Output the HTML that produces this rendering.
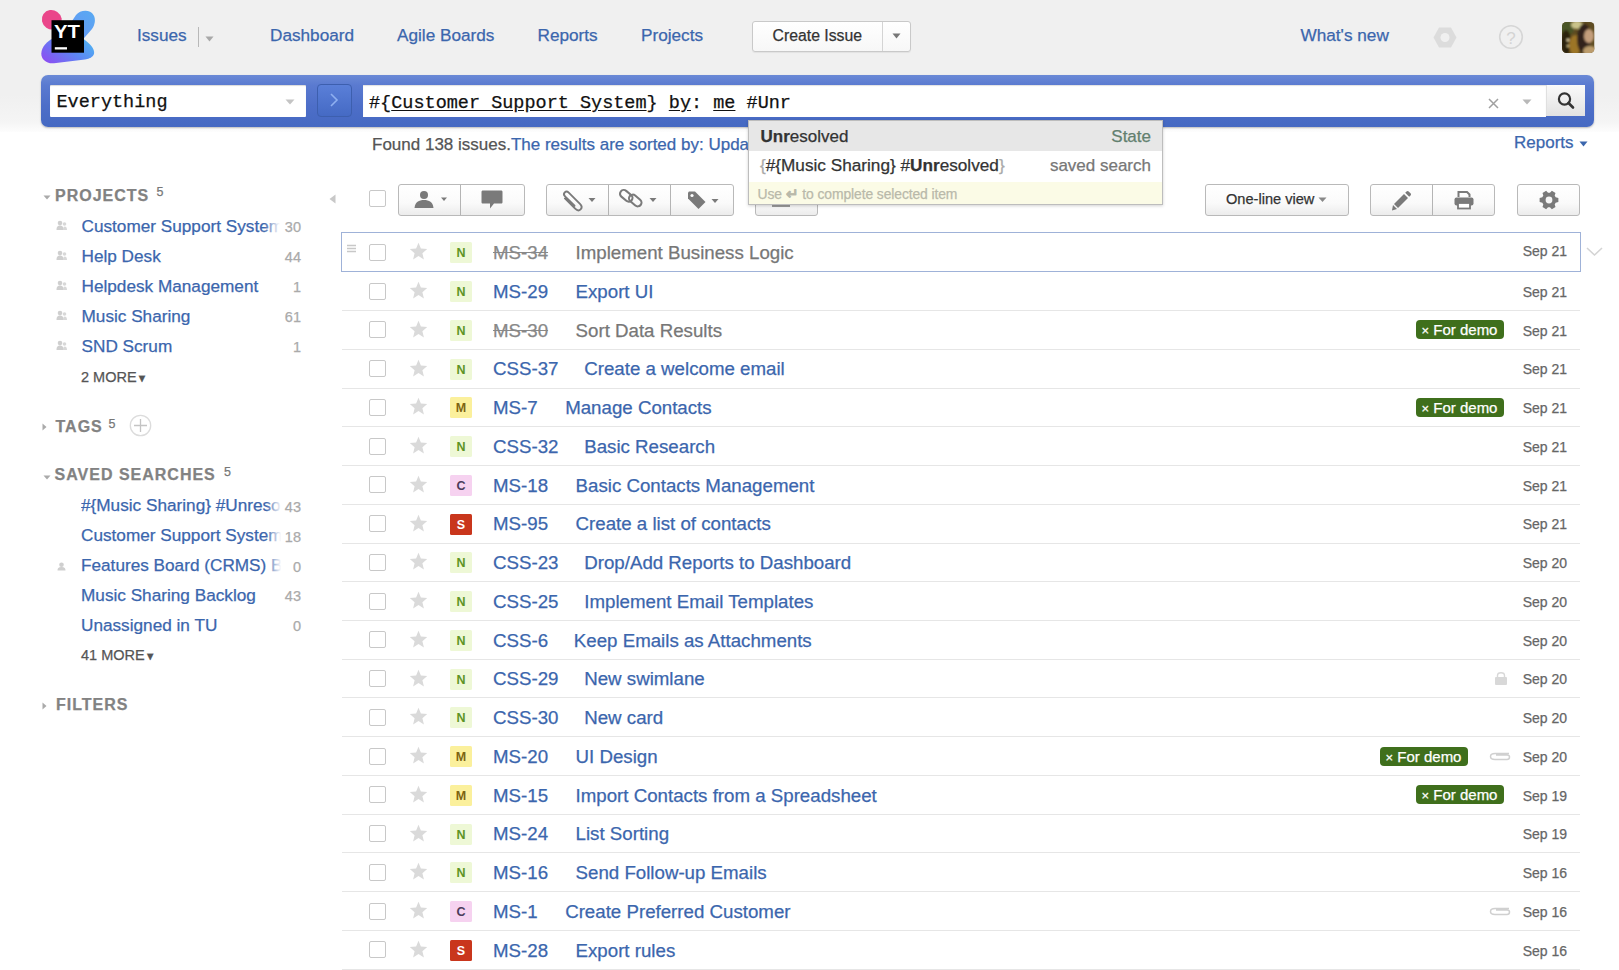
<!DOCTYPE html>
<html><head><meta charset="utf-8"><title>YouTrack Issues</title>
<style>
html,body{margin:0;padding:0;}
body{width:1619px;height:970px;overflow:hidden;position:relative;background:#fff;font-family:'Liberation Sans', sans-serif;}
.t{position:absolute;white-space:nowrap;-webkit-text-stroke-width:0.25px;}
svg{overflow:visible;}
</style></head><body>
<div style="position:absolute;left:0px;top:0px;width:1619px;height:132px;background:linear-gradient(#f0f0f0 0px,#f0f0f0 95px,#f5f5f5 122px,#fdfdfd 132px);"></div>
<svg style="position:absolute;left:40px;top:9px" width="56" height="56" viewBox="0 0 56 56">
<defs><linearGradient id="lg1" x1="0" y1="0.8" x2="1" y2="0.2"><stop offset="0" stop-color="#8b4ff2"/><stop offset="0.55" stop-color="#5c86f4"/><stop offset="1" stop-color="#4fb4f2"/></linearGradient>
<linearGradient id="lg2" x1="0" y1="1" x2="1" y2="0"><stop offset="0" stop-color="#6a8ef5"/><stop offset="1" stop-color="#58aaf2"/></linearGradient></defs>
<ellipse cx="11.8" cy="10.8" rx="10.2" ry="9.6" transform="rotate(35 11.8 10.8)" fill="#ea468a"/>
<path d="M20 30 L36 6 C40 1, 50 0, 53.5 6 C56 10, 55 16, 52 20 L38 36 Z" fill="url(#lg2)"/>
<path d="M14 29 L42 29 C50 34, 55 40, 54 45 C53 48, 50 49.5, 45 50.5 L14 54.3 C6 55, 1.2 50, 1.3 44.5 C1.5 38, 7 32, 14 29 Z" fill="url(#lg1)"/>
<rect x="11.5" y="11.2" width="32.5" height="32.5" fill="#000"/>
<text x="14" y="29" font-family="Liberation Sans" font-weight="700" font-size="18.6" fill="#fff" textLength="26" lengthAdjust="spacingAndGlyphs">YT</text>
<rect x="14.8" y="38.2" width="12.2" height="2.3" fill="#fff"/>
</svg>
<div class="t" style="left:137px;top:26.74px;font-size:17.2px;line-height:17.2px;color:#3b66ad;font-weight:400;font-family:'Liberation Sans', sans-serif;">Issues</div>
<div style="position:absolute;left:198px;top:27px;width:1px;height:20px;background:#b8b8b8;"></div>
<svg style="position:absolute;left:205px;top:36px" width="9" height="6" viewBox="0 0 9 6"><path d="M0.5 0.5 L8.5 0.5 L4.5 5.5 Z" fill="#a8a8a8"/></svg>
<div class="t" style="left:270px;top:26.74px;font-size:17.2px;line-height:17.2px;color:#3b66ad;font-weight:400;font-family:'Liberation Sans', sans-serif;">Dashboard</div>
<div class="t" style="left:397px;top:26.74px;font-size:17.2px;line-height:17.2px;color:#3b66ad;font-weight:400;font-family:'Liberation Sans', sans-serif;">Agile Boards</div>
<div class="t" style="left:537.5px;top:26.74px;font-size:17.2px;line-height:17.2px;color:#3b66ad;font-weight:400;font-family:'Liberation Sans', sans-serif;">Reports</div>
<div class="t" style="left:641px;top:26.74px;font-size:17.2px;line-height:17.2px;color:#3b66ad;font-weight:400;font-family:'Liberation Sans', sans-serif;">Projects</div>
<div style="position:absolute;left:752px;top:21px;width:159px;height:31px;background:linear-gradient(#ffffff,#f7f7f7);border:1px solid #c9c9c9;border-radius:3px;box-sizing:border-box;box-shadow:0 1px 1px rgba(0,0,0,0.06);"></div>
<div style="position:absolute;left:882px;top:22px;width:1px;height:29px;background:#d4d4d4;"></div>
<div class="t" style="left:772.5px;top:27.73px;font-size:15.8px;line-height:15.8px;color:#333;font-weight:400;font-family:'Liberation Sans', sans-serif;">Create Issue</div>
<svg style="position:absolute;left:892px;top:33px" width="9" height="6" viewBox="0 0 9 6"><path d="M0.5 0.5 L8.5 0.5 L4.5 5.5 Z" fill="#777"/></svg>
<div class="t" style="left:1300.5px;top:26.94px;font-size:17.2px;line-height:17.2px;color:#3b66ad;font-weight:400;font-family:'Liberation Sans', sans-serif;">What's new</div>
<svg style="position:absolute;left:1433px;top:27px" width="24" height="21" viewBox="0 0 24 21"><path d="M6 0.5 L18 0.5 L23.5 10.5 L18 20.5 L6 20.5 L0.5 10.5 Z" fill="#dcdcdc"/><circle cx="12" cy="10.5" r="4.5" fill="#f0f0f0"/></svg>
<svg style="position:absolute;left:1498px;top:24px" width="26" height="26" viewBox="0 0 26 26"><circle cx="13" cy="13" r="11.3" fill="none" stroke="#d6d6d6" stroke-width="1.6"/><text x="13" y="19.5" text-anchor="middle" font-family="Liberation Sans" font-size="17" fill="#d4d4d4">?</text></svg>
<svg style="position:absolute;left:1561.5px;top:22px" width="32.5" height="31" viewBox="0 0 32.5 31"><defs><clipPath id="avc"><rect x="0" y="0" width="32.5" height="31" rx="4.5"/></clipPath><filter id="avb" x="-20%" y="-20%" width="140%" height="140%"><feGaussianBlur stdDeviation="1.1"/></filter></defs>
<g clip-path="url(#avc)"><rect x="0" y="0" width="32.5" height="31" fill="#5e4c22"/><g filter="url(#avb)">
<ellipse cx="5" cy="6" rx="7" ry="7" fill="#4a5426"/><ellipse cx="15" cy="3" rx="6" ry="4" fill="#c9c28a"/>
<ellipse cx="4" cy="20" rx="5" ry="12" fill="#2a2210"/><ellipse cx="13" cy="23" rx="6" ry="10" fill="#9c7428"/>
<ellipse cx="22" cy="17" rx="7" ry="15" fill="#33241a"/><ellipse cx="27" cy="14" rx="5" ry="7" fill="#c49e7c"/>
<ellipse cx="28" cy="29" rx="7" ry="5" fill="#bc9c6c"/><circle cx="6" cy="18" r="1.5" fill="#e6d6a6"/><circle cx="6" cy="24" r="1.3" fill="#c8b880"/>
</g></g></svg>
<div style="position:absolute;left:41px;top:75px;width:1553px;height:52px;border-radius:7px;background:linear-gradient(#6b8ad6 0%,#5a7ad0 20%,#4d6ec8 60%,#4569c2 100%);box-shadow:0 1px 2px rgba(0,0,0,0.25);"></div>
<div style="position:absolute;left:50px;top:85px;width:256px;height:32px;background:#fff;border-radius:1px;box-shadow:inset 0 1px 1px rgba(0,0,0,0.15);"></div>
<div class="t" style="left:56.5px;top:94.22px;font-size:18.5px;line-height:18.5px;color:#111;font-weight:400;font-family:'Liberation Mono', monospace;">Everything</div>
<svg style="position:absolute;left:285px;top:99px" width="10" height="6" viewBox="0 0 10 6"><path d="M0.5 0.5 L9.5 0.5 L5 5.5 Z" fill="#c4c4c4"/></svg>
<div style="position:absolute;left:317px;top:84px;width:35px;height:33px;border-radius:4px;background:linear-gradient(#5a7fd8,#456ac4);border:1px solid #3d5fae;box-sizing:border-box;"></div>
<svg style="position:absolute;left:329px;top:92px" width="10" height="16" viewBox="0 0 10 16"><path d="M2 2 L8 8 L2 14" fill="none" stroke="#8fb0f0" stroke-width="1.6"/></svg>
<div style="position:absolute;left:363px;top:85px;width:1183px;height:32px;background:#fff;box-shadow:inset 0 1px 1px rgba(0,0,0,0.12);"></div>
<div class="t" style="left:369px;top:94.82px;font-size:18.5px;line-height:18.5px;color:#111;font-weight:400;font-family:'Liberation Mono', monospace;text-decoration-thickness:1px;text-underline-offset:2px;">#{<u>Customer Support System</u>} <u>by</u>: <u>me</u> #Unr</div>
<svg style="position:absolute;left:1488px;top:98px" width="11" height="11" viewBox="0 0 11 11"><path d="M1 1 L10 10 M10 1 L1 10" stroke="#a0a0a0" stroke-width="1.5"/></svg>
<svg style="position:absolute;left:1522px;top:99px" width="10" height="6" viewBox="0 0 10 6"><path d="M0.5 0.5 L9.5 0.5 L5 5.5 Z" fill="#b8b8b8"/></svg>
<div style="position:absolute;left:1546px;top:85px;width:39px;height:31px;background:linear-gradient(#fafafa,#e2e2e2);border-left:1px solid #e0e0e0;box-sizing:border-box;"></div>
<svg style="position:absolute;left:1555px;top:90px" width="22" height="22" viewBox="0 0 22 22"><circle cx="9.5" cy="9" r="5.6" fill="none" stroke="#333" stroke-width="2.2"/><path d="M13.5 13 L18 17.5" stroke="#333" stroke-width="2.6" stroke-linecap="round"/></svg>
<div class="t" style="left:372px;top:135.81px;font-size:17px;line-height:17px;color:#555;font-weight:400;font-family:'Liberation Sans', sans-serif;width:378px;overflow:hidden;">Found 138 issues.<span style="color:#3b66ad">The results are sorted by: Updated</span></div>
<div class="t" style="left:1514px;top:134.11px;font-size:17px;line-height:17px;color:#3b66ad;font-weight:400;font-family:'Liberation Sans', sans-serif;">Reports</div>
<svg style="position:absolute;left:1579px;top:141px" width="9" height="6" viewBox="0 0 9 6"><path d="M0.5 0.5 L8.5 0.5 L4.5 5.5 Z" fill="#3b66ad"/></svg>
<div style="position:absolute;left:369px;top:190px;width:17px;height:17px;border:1px solid #c8c8c8;border-radius:2px;box-sizing:border-box;background:#fff;"></div>
<div style="position:absolute;left:398px;top:184px;width:127px;height:32px;background:linear-gradient(#ffffff 0%,#fafafa 60%,#ececec 100%);border:1px solid #b9b9b9;border-radius:3px;box-sizing:border-box;"></div>
<div style="position:absolute;left:460px;top:185px;width:1px;height:30px;background:#b4b4b4;"></div>
<svg style="position:absolute;left:412px;top:187px" width="40" height="24" viewBox="0 0 40 24"><circle cx="12" cy="8" r="4" fill="#7a7a7a"/><path d="M2.5 21 C 3 15, 7 13, 12 13 C 17 13, 21 15, 21.5 21 Z" fill="#7a7a7a"/><path d="M29 10.5 L35 10.5 L32 14 Z" fill="#7a7a7a"/></svg>
<svg style="position:absolute;left:480px;top:188px" width="26" height="24" viewBox="0 0 26 24"><path d="M3 2.5 L21 2.5 C22 2.5 22.5 3 22.5 4 L22.5 14 C22.5 15 22 15.5 21 15.5 L14 15.5 L10 20.5 L10 15.5 L3 15.5 C2 15.5 1.5 15 1.5 14 L1.5 4 C1.5 3 2 2.5 3 2.5 Z" fill="#7a7a7a"/></svg>
<div style="position:absolute;left:546px;top:184px;width:188px;height:32px;background:linear-gradient(#ffffff 0%,#fafafa 60%,#ececec 100%);border:1px solid #b9b9b9;border-radius:3px;box-sizing:border-box;"></div>
<div style="position:absolute;left:608px;top:185px;width:1px;height:30px;background:#b4b4b4;"></div>
<div style="position:absolute;left:670px;top:185px;width:1px;height:30px;background:#b4b4b4;"></div>
<svg style="position:absolute;left:560px;top:188px" width="40" height="26" viewBox="0 0 40 26"><g transform="rotate(-45 12.4 13.4)"><path d="M9.2 6 L9.2 20.5 C9.2 23 10.6 24.8 12.6 24.8 C14.6 24.8 16 23 16 20.5 L16 4.6 C16 2.8 14.9 1.6 13.4 1.6 C11.9 1.6 10.8 2.8 10.8 4.6 L10.8 18" fill="none" stroke="#7a7a7a" stroke-width="1.9" stroke-linecap="round" transform="translate(0,0)"/></g><path d="M28.5 10 L35.5 10 L32 14 Z" fill="#7a7a7a"/></svg>
<svg style="position:absolute;left:618px;top:188px" width="44" height="24" viewBox="0 0 44 24"><rect x="4.5" y="0.8" width="7.5" height="14" rx="3.75" transform="rotate(-50 8.25 7.8)" fill="none" stroke="#7a7a7a" stroke-width="2.1"/><rect x="13.5" y="5.5" width="7.5" height="14" rx="3.75" transform="rotate(-50 17.25 12.5)" fill="none" stroke="#7a7a7a" stroke-width="2.1"/><path d="M31.5 10 L38.5 10 L35 14 Z" fill="#7a7a7a"/></svg>
<svg style="position:absolute;left:686px;top:188.5px" width="40" height="26" viewBox="0 0 40 26"><path d="M2 3.5 L2 9.5 L12.5 20 L19.5 13 L9 2.5 L3 2.5 Z" fill="#7a7a7a"/><circle cx="6" cy="6.5" r="1.6" fill="#fff"/><path d="M25.5 10 L32.5 10 L29 14 Z" fill="#7a7a7a"/></svg>
<div style="position:absolute;left:755px;top:184px;width:63px;height:32px;background:linear-gradient(#ffffff 0%,#fafafa 60%,#ececec 100%);border:1px solid #b9b9b9;border-radius:3px;box-sizing:border-box;"></div>
<div style="position:absolute;left:772px;top:197px;width:18px;height:10px;border:2px solid #9a9a9a;border-top:none;box-sizing:border-box;"></div>
<div style="position:absolute;left:1205px;top:184px;width:144px;height:32px;background:linear-gradient(#ffffff 0%,#fafafa 60%,#ececec 100%);border:1px solid #b9b9b9;border-radius:3px;box-sizing:border-box;"></div>
<div class="t" style="left:1226px;top:192.14px;font-size:14.6px;line-height:14.6px;color:#333;font-weight:400;font-family:'Liberation Sans', sans-serif;">One-line view</div>
<svg style="position:absolute;left:1318px;top:197px" width="9" height="6" viewBox="0 0 9 6"><path d="M0.5 0.5 L8.5 0.5 L4.5 5 Z" fill="#888"/></svg>
<div style="position:absolute;left:1370px;top:184px;width:125px;height:32px;background:linear-gradient(#ffffff 0%,#fafafa 60%,#ececec 100%);border:1px solid #b9b9b9;border-radius:3px;box-sizing:border-box;"></div>
<div style="position:absolute;left:1432px;top:185px;width:1px;height:30px;background:#b4b4b4;"></div>
<svg style="position:absolute;left:1390px;top:190px" width="22" height="22" viewBox="0 0 22 22"><path d="M4 14 L14 4 L18 8 L8 18 Z" fill="#7a7a7a"/><path d="M15.2 2.8 L16.5 1.5 C17.2 0.8 18 0.8 18.7 1.5 L20.5 3.3 C21.2 4 21.2 4.8 20.5 5.5 L19.2 6.8 Z" fill="#7a7a7a"/><path d="M3 15 L7 19 L2 20.5 Z" fill="#7a7a7a"/></svg>
<svg style="position:absolute;left:1453px;top:190px" width="22" height="22" viewBox="0 0 22 22"><path d="M5.5 7 L5.5 2 L14 2 L16.5 4.5 L16.5 7" fill="none" stroke="#7a7a7a" stroke-width="2"/><rect x="1.5" y="7.5" width="19" height="8" rx="2" fill="#7a7a7a"/><rect x="5" y="13" width="12" height="5.5" fill="#fff" stroke="#7a7a7a" stroke-width="1.8"/></svg>
<div style="position:absolute;left:1517px;top:184px;width:63px;height:32px;background:linear-gradient(#ffffff 0%,#fafafa 60%,#ececec 100%);border:1px solid #b9b9b9;border-radius:3px;box-sizing:border-box;"></div>
<svg style="position:absolute;left:1537px;top:188px" width="24" height="24" viewBox="0 0 24 24"><polygon points="21.37,9.90 21.37,14.10 18.66,14.74 17.70,16.40 18.50,19.07 14.87,21.16 12.96,19.14 11.04,19.14 9.13,21.16 5.50,19.07 6.30,16.40 5.34,14.74 2.63,14.10 2.63,9.90 5.34,9.26 6.30,7.60 5.50,4.93 9.13,2.84 11.04,4.86 12.96,4.86 14.87,2.84 18.50,4.93 17.70,7.60 18.66,9.26" fill="#7a7a7a"/><circle cx="12" cy="12" r="3.4" fill="#f6f6f6"/></svg>
<svg style="position:absolute;left:43px;top:195px" width="8" height="5" viewBox="0 0 8 5"><path d="M0.5 0.5 L7.5 0.5 L4 4.5 Z" fill="#aaa"/></svg>
<div class="t" style="left:55px;top:187.76px;font-size:16px;line-height:16px;color:#828282;font-weight:700;font-family:'Liberation Sans', sans-serif;letter-spacing:1.0px;">PROJECTS</div>
<div class="t" style="left:156.5px;top:186.42px;font-size:12.5px;line-height:12.5px;color:#777;font-weight:400;font-family:'Liberation Sans', sans-serif;">5</div>
<svg style="position:absolute;left:329px;top:194px" width="7" height="10" viewBox="0 0 7 10"><path d="M6.5 0.5 L6.5 9.5 L0.5 5 Z" fill="#c8c8c8"/></svg>
<svg style="position:absolute;left:56px;top:220.2px" width="12" height="11" viewBox="0 0 12 11"><circle cx="4" cy="3" r="2.3" fill="#cfcfcf"/><path d="M0.5 10 C0.5 6.5 2 5.5 4 5.5 C6 5.5 7.5 6.5 7.5 10 Z" fill="#cfcfcf"/><circle cx="8.5" cy="4" r="1.8" fill="#d8d8d8"/><path d="M7 10 C7 7 8 6.5 8.8 6.5 C10 6.5 11 7.5 11 10 Z" fill="#d8d8d8"/></svg>
<div class="t" style="left:81.5px;top:218.14px;font-size:17.2px;line-height:17.2px;color:#3b66ad;font-weight:400;font-family:'Liberation Sans', sans-serif;width:201px;overflow:hidden;white-space:nowrap;">Customer Support System</div>
<div class="t" style="right:1318px;top:220.43px;font-size:14.5px;line-height:14.5px;color:#aaa;font-weight:400;font-family:'Liberation Sans', sans-serif;">30</div>
<svg style="position:absolute;left:56px;top:249.7px" width="12" height="11" viewBox="0 0 12 11"><circle cx="4" cy="3" r="2.3" fill="#cfcfcf"/><path d="M0.5 10 C0.5 6.5 2 5.5 4 5.5 C6 5.5 7.5 6.5 7.5 10 Z" fill="#cfcfcf"/><circle cx="8.5" cy="4" r="1.8" fill="#d8d8d8"/><path d="M7 10 C7 7 8 6.5 8.8 6.5 C10 6.5 11 7.5 11 10 Z" fill="#d8d8d8"/></svg>
<div class="t" style="left:81.5px;top:247.64px;font-size:17.2px;line-height:17.2px;color:#3b66ad;font-weight:400;font-family:'Liberation Sans', sans-serif;width:201px;overflow:hidden;white-space:nowrap;">Help Desk</div>
<div class="t" style="right:1318px;top:249.93px;font-size:14.5px;line-height:14.5px;color:#aaa;font-weight:400;font-family:'Liberation Sans', sans-serif;">44</div>
<svg style="position:absolute;left:56px;top:280.0px" width="12" height="11" viewBox="0 0 12 11"><circle cx="4" cy="3" r="2.3" fill="#cfcfcf"/><path d="M0.5 10 C0.5 6.5 2 5.5 4 5.5 C6 5.5 7.5 6.5 7.5 10 Z" fill="#cfcfcf"/><circle cx="8.5" cy="4" r="1.8" fill="#d8d8d8"/><path d="M7 10 C7 7 8 6.5 8.8 6.5 C10 6.5 11 7.5 11 10 Z" fill="#d8d8d8"/></svg>
<div class="t" style="left:81.5px;top:277.94px;font-size:17.2px;line-height:17.2px;color:#3b66ad;font-weight:400;font-family:'Liberation Sans', sans-serif;width:201px;overflow:hidden;white-space:nowrap;">Helpdesk Management</div>
<div class="t" style="right:1318px;top:280.23px;font-size:14.5px;line-height:14.5px;color:#aaa;font-weight:400;font-family:'Liberation Sans', sans-serif;">1</div>
<svg style="position:absolute;left:56px;top:309.9px" width="12" height="11" viewBox="0 0 12 11"><circle cx="4" cy="3" r="2.3" fill="#cfcfcf"/><path d="M0.5 10 C0.5 6.5 2 5.5 4 5.5 C6 5.5 7.5 6.5 7.5 10 Z" fill="#cfcfcf"/><circle cx="8.5" cy="4" r="1.8" fill="#d8d8d8"/><path d="M7 10 C7 7 8 6.5 8.8 6.5 C10 6.5 11 7.5 11 10 Z" fill="#d8d8d8"/></svg>
<div class="t" style="left:81.5px;top:307.84px;font-size:17.2px;line-height:17.2px;color:#3b66ad;font-weight:400;font-family:'Liberation Sans', sans-serif;width:201px;overflow:hidden;white-space:nowrap;">Music Sharing</div>
<div class="t" style="right:1318px;top:310.13px;font-size:14.5px;line-height:14.5px;color:#aaa;font-weight:400;font-family:'Liberation Sans', sans-serif;">61</div>
<svg style="position:absolute;left:56px;top:339.7px" width="12" height="11" viewBox="0 0 12 11"><circle cx="4" cy="3" r="2.3" fill="#cfcfcf"/><path d="M0.5 10 C0.5 6.5 2 5.5 4 5.5 C6 5.5 7.5 6.5 7.5 10 Z" fill="#cfcfcf"/><circle cx="8.5" cy="4" r="1.8" fill="#d8d8d8"/><path d="M7 10 C7 7 8 6.5 8.8 6.5 C10 6.5 11 7.5 11 10 Z" fill="#d8d8d8"/></svg>
<div class="t" style="left:81.5px;top:337.64px;font-size:17.2px;line-height:17.2px;color:#3b66ad;font-weight:400;font-family:'Liberation Sans', sans-serif;width:201px;overflow:hidden;white-space:nowrap;">SND Scrum</div>
<div class="t" style="right:1318px;top:339.93px;font-size:14.5px;line-height:14.5px;color:#aaa;font-weight:400;font-family:'Liberation Sans', sans-serif;">1</div>
<div style="position:absolute;left:264px;top:215px;width:20px;height:22px;background:linear-gradient(90deg, rgba(255,255,255,0), #fff 80%);"></div>
<div class="t" style="left:81px;top:369.73px;font-size:14.5px;line-height:14.5px;color:#555;font-weight:400;font-family:'Liberation Sans', sans-serif;">2 MORE<span style="font-size:11px">&#9660;</span></div>
<svg style="position:absolute;left:42px;top:423px" width="5" height="8" viewBox="0 0 5 8"><path d="M0.5 0.5 L4.5 4 L0.5 7.5 Z" fill="#aaa"/></svg>
<div class="t" style="left:55.5px;top:419.46px;font-size:16px;line-height:16px;color:#828282;font-weight:700;font-family:'Liberation Sans', sans-serif;letter-spacing:1.0px;">TAGS</div>
<div class="t" style="left:108.5px;top:418.12px;font-size:12.5px;line-height:12.5px;color:#777;font-weight:400;font-family:'Liberation Sans', sans-serif;">5</div>
<svg style="position:absolute;left:129px;top:414px" width="23" height="23" viewBox="0 0 23 23"><circle cx="11.5" cy="11.5" r="10.2" fill="#fff" stroke="#dcdcdc" stroke-width="1.3"/><path d="M11.5 5 L11.5 18 M5 11.5 L18 11.5" stroke="#c4c4c4" stroke-width="1.3"/></svg>
<svg style="position:absolute;left:43px;top:475px" width="8" height="5" viewBox="0 0 8 5"><path d="M0.5 0.5 L7.5 0.5 L4 4.5 Z" fill="#aaa"/></svg>
<div class="t" style="left:54.5px;top:467.06px;font-size:16px;line-height:16px;color:#828282;font-weight:700;font-family:'Liberation Sans', sans-serif;letter-spacing:1.0px;">SAVED SEARCHES</div>
<div class="t" style="left:224px;top:465.72px;font-size:12.5px;line-height:12.5px;color:#777;font-weight:400;font-family:'Liberation Sans', sans-serif;">5</div>
<div class="t" style="left:81px;top:497.44px;font-size:17.2px;line-height:17.2px;color:#3b66ad;font-weight:400;font-family:'Liberation Sans', sans-serif;width:202px;overflow:hidden;white-space:nowrap;">#{Music Sharing} #Unresolved</div>
<div class="t" style="right:1318px;top:499.73px;font-size:14.5px;line-height:14.5px;color:#aaa;font-weight:400;font-family:'Liberation Sans', sans-serif;">43</div>
<div class="t" style="left:81px;top:527.24px;font-size:17.2px;line-height:17.2px;color:#3b66ad;font-weight:400;font-family:'Liberation Sans', sans-serif;width:202px;overflow:hidden;white-space:nowrap;">Customer Support System</div>
<div class="t" style="right:1318px;top:529.53px;font-size:14.5px;line-height:14.5px;color:#aaa;font-weight:400;font-family:'Liberation Sans', sans-serif;">18</div>
<svg style="position:absolute;left:57px;top:561.9px" width="10" height="9" viewBox="0 0 10 9"><circle cx="4.5" cy="2.8" r="2.3" fill="#cfcfcf"/><path d="M0.5 8.5 C0.5 5.5 2.5 5 4.5 5 C6.5 5 8.5 5.5 8.5 8.5 Z" fill="#cfcfcf"/></svg>
<div class="t" style="left:81px;top:557.34px;font-size:17.2px;line-height:17.2px;color:#3b66ad;font-weight:400;font-family:'Liberation Sans', sans-serif;width:202px;overflow:hidden;white-space:nowrap;">Features Board (CRMS) Backlog</div>
<div class="t" style="right:1318px;top:559.63px;font-size:14.5px;line-height:14.5px;color:#aaa;font-weight:400;font-family:'Liberation Sans', sans-serif;">0</div>
<div class="t" style="left:81px;top:587.04px;font-size:17.2px;line-height:17.2px;color:#3b66ad;font-weight:400;font-family:'Liberation Sans', sans-serif;width:202px;overflow:hidden;white-space:nowrap;">Music Sharing Backlog</div>
<div class="t" style="right:1318px;top:589.33px;font-size:14.5px;line-height:14.5px;color:#aaa;font-weight:400;font-family:'Liberation Sans', sans-serif;">43</div>
<div class="t" style="left:81px;top:617.14px;font-size:17.2px;line-height:17.2px;color:#3b66ad;font-weight:400;font-family:'Liberation Sans', sans-serif;width:202px;overflow:hidden;white-space:nowrap;">Unassigned in TU</div>
<div class="t" style="right:1318px;top:619.43px;font-size:14.5px;line-height:14.5px;color:#aaa;font-weight:400;font-family:'Liberation Sans', sans-serif;">0</div>
<div style="position:absolute;left:266px;top:495px;width:18px;height:82px;background:linear-gradient(90deg, rgba(255,255,255,0), #fff 85%);"></div>
<div class="t" style="left:81px;top:648.03px;font-size:14.5px;line-height:14.5px;color:#555;font-weight:400;font-family:'Liberation Sans', sans-serif;">41 MORE<span style="font-size:11px">&#9660;</span></div>
<svg style="position:absolute;left:42px;top:702px" width="5" height="8" viewBox="0 0 5 8"><path d="M0.5 0.5 L4.5 4 L0.5 7.5 Z" fill="#aaa"/></svg>
<div class="t" style="left:56px;top:697.36px;font-size:16px;line-height:16px;color:#828282;font-weight:700;font-family:'Liberation Sans', sans-serif;letter-spacing:1.0px;">FILTERS</div>
<div class="t" style="left:0px;top:696.02px;font-size:12.5px;line-height:12.5px;color:#777;font-weight:400;font-family:'Liberation Sans', sans-serif;"></div>
<div style="position:absolute;left:341px;top:232px;width:1240px;height:39.5px;border:1.5px solid #9fb2d8;box-sizing:border-box;background:#fff;"></div>
<svg style="position:absolute;left:346px;top:244px" width="11" height="10" viewBox="0 0 11 10"><path d="M1 1.5 H10 M1 4.5 H10 M1 7.5 H10" stroke="#c8c8c8" stroke-width="1.3"/></svg>
<svg style="position:absolute;left:1586px;top:247px" width="17" height="10" viewBox="0 0 17 10"><path d="M1 1 L8.5 8 L16 1" fill="none" stroke="#d4d4d4" stroke-width="1.6"/></svg>
<div style="position:absolute;left:369px;top:243.97px;width:17px;height:17px;border:1px solid #c8c8c8;border-radius:2px;box-sizing:border-box;background:#fff;"></div>
<svg style="position:absolute;left:409px;top:242.47px" width="19" height="19" viewBox="0 0 19 19"><path d="M9.5 0.8 L11.9 6.6 L18.2 7.1 L13.4 11.2 L14.9 17.4 L9.5 14 L4.1 17.4 L5.6 11.2 L0.8 7.1 L7.1 6.6 Z" fill="#dadada"/></svg>
<div class="t" style="left:450px;top:242.47px;width:22px;height:21px;line-height:22.5px;text-align:center;background:#eef8d6;color:#5e9424;-webkit-text-stroke-width:0;font-size:12.5px;font-family:'Liberation Sans', sans-serif;border-radius:1.5px;font-weight:700">N</div>
<div class="t" style="left:493px;top:244.24px;font-size:18.7px;line-height:18.7px;font-family:'Liberation Sans', sans-serif;white-space:nowrap"><span style="color:#888;text-decoration:line-through;">MS-34</span><span style="color:#777;margin-left:27.5px">Implement Business Logic</span></div>
<div class="t" style="right:52px;top:244.22px;font-size:14px;line-height:14px;color:#666;font-weight:400;font-family:'Liberation Sans', sans-serif;">Sep 21</div>
<div style="position:absolute;left:342px;top:310px;width:1238px;height:1px;background:#e6e6e6;"></div>
<div style="position:absolute;left:369px;top:282.71px;width:17px;height:17px;border:1px solid #c8c8c8;border-radius:2px;box-sizing:border-box;background:#fff;"></div>
<svg style="position:absolute;left:409px;top:281.21px" width="19" height="19" viewBox="0 0 19 19"><path d="M9.5 0.8 L11.9 6.6 L18.2 7.1 L13.4 11.2 L14.9 17.4 L9.5 14 L4.1 17.4 L5.6 11.2 L0.8 7.1 L7.1 6.6 Z" fill="#dadada"/></svg>
<div class="t" style="left:450px;top:281.21px;width:22px;height:21px;line-height:22.5px;text-align:center;background:#eef8d6;color:#5e9424;-webkit-text-stroke-width:0;font-size:12.5px;font-family:'Liberation Sans', sans-serif;border-radius:1.5px;font-weight:700">N</div>
<div class="t" style="left:493px;top:282.98px;font-size:18.7px;line-height:18.7px;font-family:'Liberation Sans', sans-serif;white-space:nowrap"><span style="color:#3b66ad;">MS-29</span><span style="color:#3b66ad;margin-left:27.5px">Export UI</span></div>
<div class="t" style="right:52px;top:284.96px;font-size:14px;line-height:14px;color:#666;font-weight:400;font-family:'Liberation Sans', sans-serif;">Sep 21</div>
<div style="position:absolute;left:342px;top:349px;width:1238px;height:1px;background:#e6e6e6;"></div>
<div style="position:absolute;left:369px;top:321.45px;width:17px;height:17px;border:1px solid #c8c8c8;border-radius:2px;box-sizing:border-box;background:#fff;"></div>
<svg style="position:absolute;left:409px;top:319.95px" width="19" height="19" viewBox="0 0 19 19"><path d="M9.5 0.8 L11.9 6.6 L18.2 7.1 L13.4 11.2 L14.9 17.4 L9.5 14 L4.1 17.4 L5.6 11.2 L0.8 7.1 L7.1 6.6 Z" fill="#dadada"/></svg>
<div class="t" style="left:450px;top:319.95px;width:22px;height:21px;line-height:22.5px;text-align:center;background:#eef8d6;color:#5e9424;-webkit-text-stroke-width:0;font-size:12.5px;font-family:'Liberation Sans', sans-serif;border-radius:1.5px;font-weight:700">N</div>
<div class="t" style="left:493px;top:321.72px;font-size:18.7px;line-height:18.7px;font-family:'Liberation Sans', sans-serif;white-space:nowrap"><span style="color:#888;text-decoration:line-through;">MS-30</span><span style="color:#777;margin-left:27.5px">Sort Data Results</span></div>
<div class="t" style="right:52px;top:323.70px;font-size:14px;line-height:14px;color:#666;font-weight:400;font-family:'Liberation Sans', sans-serif;">Sep 21</div>
<div class="t" style="left:1415.5px;top:320.45px;width:88px;height:19px;line-height:19px;background:#3f6f1c;color:#fff;font-size:15px;font-family:'Liberation Sans', sans-serif;border-radius:4px;text-align:center;white-space:nowrap"><span style="font-size:13px">&#215;</span> For demo</div>
<div style="position:absolute;left:342px;top:388px;width:1238px;height:1px;background:#e6e6e6;"></div>
<div style="position:absolute;left:369px;top:360.19px;width:17px;height:17px;border:1px solid #c8c8c8;border-radius:2px;box-sizing:border-box;background:#fff;"></div>
<svg style="position:absolute;left:409px;top:358.69px" width="19" height="19" viewBox="0 0 19 19"><path d="M9.5 0.8 L11.9 6.6 L18.2 7.1 L13.4 11.2 L14.9 17.4 L9.5 14 L4.1 17.4 L5.6 11.2 L0.8 7.1 L7.1 6.6 Z" fill="#dadada"/></svg>
<div class="t" style="left:450px;top:358.69px;width:22px;height:21px;line-height:22.5px;text-align:center;background:#eef8d6;color:#5e9424;-webkit-text-stroke-width:0;font-size:12.5px;font-family:'Liberation Sans', sans-serif;border-radius:1.5px;font-weight:700">N</div>
<div class="t" style="left:493px;top:360.46px;font-size:18.7px;line-height:18.7px;font-family:'Liberation Sans', sans-serif;white-space:nowrap"><span style="color:#3b66ad;">CSS-37</span><span style="color:#3b66ad;margin-left:25.8px">Create a welcome email</span></div>
<div class="t" style="right:52px;top:362.44px;font-size:14px;line-height:14px;color:#666;font-weight:400;font-family:'Liberation Sans', sans-serif;">Sep 21</div>
<div style="position:absolute;left:342px;top:426px;width:1238px;height:1px;background:#e6e6e6;"></div>
<div style="position:absolute;left:369px;top:398.93px;width:17px;height:17px;border:1px solid #c8c8c8;border-radius:2px;box-sizing:border-box;background:#fff;"></div>
<svg style="position:absolute;left:409px;top:397.43px" width="19" height="19" viewBox="0 0 19 19"><path d="M9.5 0.8 L11.9 6.6 L18.2 7.1 L13.4 11.2 L14.9 17.4 L9.5 14 L4.1 17.4 L5.6 11.2 L0.8 7.1 L7.1 6.6 Z" fill="#dadada"/></svg>
<div class="t" style="left:450px;top:397.43px;width:22px;height:21px;line-height:22.5px;text-align:center;background:#fbf09c;color:#7e6412;-webkit-text-stroke-width:0;font-size:12.5px;font-family:'Liberation Sans', sans-serif;border-radius:1.5px;font-weight:700">M</div>
<div class="t" style="left:493px;top:399.20px;font-size:18.7px;line-height:18.7px;font-family:'Liberation Sans', sans-serif;white-space:nowrap"><span style="color:#3b66ad;">MS-7</span><span style="color:#3b66ad;margin-left:27.5px">Manage Contacts</span></div>
<div class="t" style="right:52px;top:401.18px;font-size:14px;line-height:14px;color:#666;font-weight:400;font-family:'Liberation Sans', sans-serif;">Sep 21</div>
<div class="t" style="left:1415.5px;top:397.93px;width:88px;height:19px;line-height:19px;background:#3f6f1c;color:#fff;font-size:15px;font-family:'Liberation Sans', sans-serif;border-radius:4px;text-align:center;white-space:nowrap"><span style="font-size:13px">&#215;</span> For demo</div>
<div style="position:absolute;left:342px;top:465px;width:1238px;height:1px;background:#e6e6e6;"></div>
<div style="position:absolute;left:369px;top:437.67px;width:17px;height:17px;border:1px solid #c8c8c8;border-radius:2px;box-sizing:border-box;background:#fff;"></div>
<svg style="position:absolute;left:409px;top:436.17px" width="19" height="19" viewBox="0 0 19 19"><path d="M9.5 0.8 L11.9 6.6 L18.2 7.1 L13.4 11.2 L14.9 17.4 L9.5 14 L4.1 17.4 L5.6 11.2 L0.8 7.1 L7.1 6.6 Z" fill="#dadada"/></svg>
<div class="t" style="left:450px;top:436.17px;width:22px;height:21px;line-height:22.5px;text-align:center;background:#eef8d6;color:#5e9424;-webkit-text-stroke-width:0;font-size:12.5px;font-family:'Liberation Sans', sans-serif;border-radius:1.5px;font-weight:700">N</div>
<div class="t" style="left:493px;top:437.94px;font-size:18.7px;line-height:18.7px;font-family:'Liberation Sans', sans-serif;white-space:nowrap"><span style="color:#3b66ad;">CSS-32</span><span style="color:#3b66ad;margin-left:25.8px">Basic Research</span></div>
<div class="t" style="right:52px;top:439.92px;font-size:14px;line-height:14px;color:#666;font-weight:400;font-family:'Liberation Sans', sans-serif;">Sep 21</div>
<div style="position:absolute;left:342px;top:504px;width:1238px;height:1px;background:#e6e6e6;"></div>
<div style="position:absolute;left:369px;top:476.40999999999997px;width:17px;height:17px;border:1px solid #c8c8c8;border-radius:2px;box-sizing:border-box;background:#fff;"></div>
<svg style="position:absolute;left:409px;top:474.90999999999997px" width="19" height="19" viewBox="0 0 19 19"><path d="M9.5 0.8 L11.9 6.6 L18.2 7.1 L13.4 11.2 L14.9 17.4 L9.5 14 L4.1 17.4 L5.6 11.2 L0.8 7.1 L7.1 6.6 Z" fill="#dadada"/></svg>
<div class="t" style="left:450px;top:474.91px;width:22px;height:21px;line-height:22.5px;text-align:center;background:#f6d2f0;color:#4b3b5b;-webkit-text-stroke-width:0;font-size:12.5px;font-family:'Liberation Sans', sans-serif;border-radius:1.5px;font-weight:700">C</div>
<div class="t" style="left:493px;top:476.68px;font-size:18.7px;line-height:18.7px;font-family:'Liberation Sans', sans-serif;white-space:nowrap"><span style="color:#3b66ad;">MS-18</span><span style="color:#3b66ad;margin-left:27.5px">Basic Contacts Management</span></div>
<div class="t" style="right:52px;top:478.66px;font-size:14px;line-height:14px;color:#666;font-weight:400;font-family:'Liberation Sans', sans-serif;">Sep 21</div>
<div style="position:absolute;left:342px;top:543px;width:1238px;height:1px;background:#e6e6e6;"></div>
<div style="position:absolute;left:369px;top:515.15px;width:17px;height:17px;border:1px solid #c8c8c8;border-radius:2px;box-sizing:border-box;background:#fff;"></div>
<svg style="position:absolute;left:409px;top:513.65px" width="19" height="19" viewBox="0 0 19 19"><path d="M9.5 0.8 L11.9 6.6 L18.2 7.1 L13.4 11.2 L14.9 17.4 L9.5 14 L4.1 17.4 L5.6 11.2 L0.8 7.1 L7.1 6.6 Z" fill="#dadada"/></svg>
<div class="t" style="left:450px;top:513.65px;width:22px;height:21px;line-height:22.5px;text-align:center;background:#c9361c;color:#ffffff;-webkit-text-stroke-width:0;font-size:12.5px;font-family:'Liberation Sans', sans-serif;border-radius:1.5px;font-weight:700">S</div>
<div class="t" style="left:493px;top:515.42px;font-size:18.7px;line-height:18.7px;font-family:'Liberation Sans', sans-serif;white-space:nowrap"><span style="color:#3b66ad;">MS-95</span><span style="color:#3b66ad;margin-left:27.5px">Create a list of contacts</span></div>
<div class="t" style="right:52px;top:517.40px;font-size:14px;line-height:14px;color:#666;font-weight:400;font-family:'Liberation Sans', sans-serif;">Sep 21</div>
<div style="position:absolute;left:342px;top:581px;width:1238px;height:1px;background:#e6e6e6;"></div>
<div style="position:absolute;left:369px;top:553.89px;width:17px;height:17px;border:1px solid #c8c8c8;border-radius:2px;box-sizing:border-box;background:#fff;"></div>
<svg style="position:absolute;left:409px;top:552.39px" width="19" height="19" viewBox="0 0 19 19"><path d="M9.5 0.8 L11.9 6.6 L18.2 7.1 L13.4 11.2 L14.9 17.4 L9.5 14 L4.1 17.4 L5.6 11.2 L0.8 7.1 L7.1 6.6 Z" fill="#dadada"/></svg>
<div class="t" style="left:450px;top:552.39px;width:22px;height:21px;line-height:22.5px;text-align:center;background:#eef8d6;color:#5e9424;-webkit-text-stroke-width:0;font-size:12.5px;font-family:'Liberation Sans', sans-serif;border-radius:1.5px;font-weight:700">N</div>
<div class="t" style="left:493px;top:554.16px;font-size:18.7px;line-height:18.7px;font-family:'Liberation Sans', sans-serif;white-space:nowrap"><span style="color:#3b66ad;">CSS-23</span><span style="color:#3b66ad;margin-left:25.8px">Drop/Add Reports to Dashboard</span></div>
<div class="t" style="right:52px;top:556.14px;font-size:14px;line-height:14px;color:#666;font-weight:400;font-family:'Liberation Sans', sans-serif;">Sep 20</div>
<div style="position:absolute;left:342px;top:620px;width:1238px;height:1px;background:#e6e6e6;"></div>
<div style="position:absolute;left:369px;top:592.63px;width:17px;height:17px;border:1px solid #c8c8c8;border-radius:2px;box-sizing:border-box;background:#fff;"></div>
<svg style="position:absolute;left:409px;top:591.13px" width="19" height="19" viewBox="0 0 19 19"><path d="M9.5 0.8 L11.9 6.6 L18.2 7.1 L13.4 11.2 L14.9 17.4 L9.5 14 L4.1 17.4 L5.6 11.2 L0.8 7.1 L7.1 6.6 Z" fill="#dadada"/></svg>
<div class="t" style="left:450px;top:591.13px;width:22px;height:21px;line-height:22.5px;text-align:center;background:#eef8d6;color:#5e9424;-webkit-text-stroke-width:0;font-size:12.5px;font-family:'Liberation Sans', sans-serif;border-radius:1.5px;font-weight:700">N</div>
<div class="t" style="left:493px;top:592.90px;font-size:18.7px;line-height:18.7px;font-family:'Liberation Sans', sans-serif;white-space:nowrap"><span style="color:#3b66ad;">CSS-25</span><span style="color:#3b66ad;margin-left:25.8px">Implement Email Templates</span></div>
<div class="t" style="right:52px;top:594.88px;font-size:14px;line-height:14px;color:#666;font-weight:400;font-family:'Liberation Sans', sans-serif;">Sep 20</div>
<div style="position:absolute;left:342px;top:659px;width:1238px;height:1px;background:#e6e6e6;"></div>
<div style="position:absolute;left:369px;top:631.37px;width:17px;height:17px;border:1px solid #c8c8c8;border-radius:2px;box-sizing:border-box;background:#fff;"></div>
<svg style="position:absolute;left:409px;top:629.87px" width="19" height="19" viewBox="0 0 19 19"><path d="M9.5 0.8 L11.9 6.6 L18.2 7.1 L13.4 11.2 L14.9 17.4 L9.5 14 L4.1 17.4 L5.6 11.2 L0.8 7.1 L7.1 6.6 Z" fill="#dadada"/></svg>
<div class="t" style="left:450px;top:629.87px;width:22px;height:21px;line-height:22.5px;text-align:center;background:#eef8d6;color:#5e9424;-webkit-text-stroke-width:0;font-size:12.5px;font-family:'Liberation Sans', sans-serif;border-radius:1.5px;font-weight:700">N</div>
<div class="t" style="left:493px;top:631.64px;font-size:18.7px;line-height:18.7px;font-family:'Liberation Sans', sans-serif;white-space:nowrap"><span style="color:#3b66ad;">CSS-6</span><span style="color:#3b66ad;margin-left:25.8px">Keep Emails as Attachments</span></div>
<div class="t" style="right:52px;top:633.62px;font-size:14px;line-height:14px;color:#666;font-weight:400;font-family:'Liberation Sans', sans-serif;">Sep 20</div>
<div style="position:absolute;left:342px;top:697px;width:1238px;height:1px;background:#e6e6e6;"></div>
<div style="position:absolute;left:369px;top:670.11px;width:17px;height:17px;border:1px solid #c8c8c8;border-radius:2px;box-sizing:border-box;background:#fff;"></div>
<svg style="position:absolute;left:409px;top:668.61px" width="19" height="19" viewBox="0 0 19 19"><path d="M9.5 0.8 L11.9 6.6 L18.2 7.1 L13.4 11.2 L14.9 17.4 L9.5 14 L4.1 17.4 L5.6 11.2 L0.8 7.1 L7.1 6.6 Z" fill="#dadada"/></svg>
<div class="t" style="left:450px;top:668.61px;width:22px;height:21px;line-height:22.5px;text-align:center;background:#eef8d6;color:#5e9424;-webkit-text-stroke-width:0;font-size:12.5px;font-family:'Liberation Sans', sans-serif;border-radius:1.5px;font-weight:700">N</div>
<div class="t" style="left:493px;top:670.38px;font-size:18.7px;line-height:18.7px;font-family:'Liberation Sans', sans-serif;white-space:nowrap"><span style="color:#3b66ad;">CSS-29</span><span style="color:#3b66ad;margin-left:25.8px">New swimlane</span></div>
<div class="t" style="right:52px;top:672.36px;font-size:14px;line-height:14px;color:#666;font-weight:400;font-family:'Liberation Sans', sans-serif;">Sep 20</div>
<svg style="position:absolute;left:1494px;top:671.61px" width="14" height="13" viewBox="0 0 14 13"><rect x="1" y="5" width="12" height="8" rx="1" fill="#d8d8d8"/><path d="M3.5 5 V3.5 C3.5 1.5 5 0.8 7 0.8 C9 0.8 10.5 1.5 10.5 3.5 V5" fill="none" stroke="#d8d8d8" stroke-width="1.4"/></svg>
<div style="position:absolute;left:342px;top:736px;width:1238px;height:1px;background:#e6e6e6;"></div>
<div style="position:absolute;left:369px;top:708.85px;width:17px;height:17px;border:1px solid #c8c8c8;border-radius:2px;box-sizing:border-box;background:#fff;"></div>
<svg style="position:absolute;left:409px;top:707.35px" width="19" height="19" viewBox="0 0 19 19"><path d="M9.5 0.8 L11.9 6.6 L18.2 7.1 L13.4 11.2 L14.9 17.4 L9.5 14 L4.1 17.4 L5.6 11.2 L0.8 7.1 L7.1 6.6 Z" fill="#dadada"/></svg>
<div class="t" style="left:450px;top:707.35px;width:22px;height:21px;line-height:22.5px;text-align:center;background:#eef8d6;color:#5e9424;-webkit-text-stroke-width:0;font-size:12.5px;font-family:'Liberation Sans', sans-serif;border-radius:1.5px;font-weight:700">N</div>
<div class="t" style="left:493px;top:709.12px;font-size:18.7px;line-height:18.7px;font-family:'Liberation Sans', sans-serif;white-space:nowrap"><span style="color:#3b66ad;">CSS-30</span><span style="color:#3b66ad;margin-left:25.8px">New card</span></div>
<div class="t" style="right:52px;top:711.10px;font-size:14px;line-height:14px;color:#666;font-weight:400;font-family:'Liberation Sans', sans-serif;">Sep 20</div>
<div style="position:absolute;left:342px;top:775px;width:1238px;height:1px;background:#e6e6e6;"></div>
<div style="position:absolute;left:369px;top:747.59px;width:17px;height:17px;border:1px solid #c8c8c8;border-radius:2px;box-sizing:border-box;background:#fff;"></div>
<svg style="position:absolute;left:409px;top:746.09px" width="19" height="19" viewBox="0 0 19 19"><path d="M9.5 0.8 L11.9 6.6 L18.2 7.1 L13.4 11.2 L14.9 17.4 L9.5 14 L4.1 17.4 L5.6 11.2 L0.8 7.1 L7.1 6.6 Z" fill="#dadada"/></svg>
<div class="t" style="left:450px;top:746.09px;width:22px;height:21px;line-height:22.5px;text-align:center;background:#fbf09c;color:#7e6412;-webkit-text-stroke-width:0;font-size:12.5px;font-family:'Liberation Sans', sans-serif;border-radius:1.5px;font-weight:700">M</div>
<div class="t" style="left:493px;top:747.86px;font-size:18.7px;line-height:18.7px;font-family:'Liberation Sans', sans-serif;white-space:nowrap"><span style="color:#3b66ad;">MS-20</span><span style="color:#3b66ad;margin-left:27.5px">UI Design</span></div>
<div class="t" style="right:52px;top:749.84px;font-size:14px;line-height:14px;color:#666;font-weight:400;font-family:'Liberation Sans', sans-serif;">Sep 20</div>
<div class="t" style="left:1379.5px;top:746.59px;width:88px;height:19px;line-height:19px;background:#3f6f1c;color:#fff;font-size:15px;font-family:'Liberation Sans', sans-serif;border-radius:4px;text-align:center;white-space:nowrap"><span style="font-size:13px">&#215;</span> For demo</div>
<svg style="position:absolute;left:1489px;top:750.09px" width="22" height="12" viewBox="0 0 22 12"><path d="M20 3.5 H6 C3 3.5 1.5 5 1.5 6.5 C1.5 8 3 9.5 6 9.5 H18 C19.5 9.5 20.5 8.5 20.5 7 C20.5 5.5 19.5 5 18 5 H7" fill="none" stroke="#d0d0d0" stroke-width="1.5"/></svg>
<div style="position:absolute;left:342px;top:814px;width:1238px;height:1px;background:#e6e6e6;"></div>
<div style="position:absolute;left:369px;top:786.33px;width:17px;height:17px;border:1px solid #c8c8c8;border-radius:2px;box-sizing:border-box;background:#fff;"></div>
<svg style="position:absolute;left:409px;top:784.83px" width="19" height="19" viewBox="0 0 19 19"><path d="M9.5 0.8 L11.9 6.6 L18.2 7.1 L13.4 11.2 L14.9 17.4 L9.5 14 L4.1 17.4 L5.6 11.2 L0.8 7.1 L7.1 6.6 Z" fill="#dadada"/></svg>
<div class="t" style="left:450px;top:784.83px;width:22px;height:21px;line-height:22.5px;text-align:center;background:#fbf09c;color:#7e6412;-webkit-text-stroke-width:0;font-size:12.5px;font-family:'Liberation Sans', sans-serif;border-radius:1.5px;font-weight:700">M</div>
<div class="t" style="left:493px;top:786.60px;font-size:18.7px;line-height:18.7px;font-family:'Liberation Sans', sans-serif;white-space:nowrap"><span style="color:#3b66ad;">MS-15</span><span style="color:#3b66ad;margin-left:27.5px">Import Contacts from a Spreadsheet</span></div>
<div class="t" style="right:52px;top:788.58px;font-size:14px;line-height:14px;color:#666;font-weight:400;font-family:'Liberation Sans', sans-serif;">Sep 19</div>
<div class="t" style="left:1415.5px;top:785.33px;width:88px;height:19px;line-height:19px;background:#3f6f1c;color:#fff;font-size:15px;font-family:'Liberation Sans', sans-serif;border-radius:4px;text-align:center;white-space:nowrap"><span style="font-size:13px">&#215;</span> For demo</div>
<div style="position:absolute;left:342px;top:852px;width:1238px;height:1px;background:#e6e6e6;"></div>
<div style="position:absolute;left:369px;top:825.07px;width:17px;height:17px;border:1px solid #c8c8c8;border-radius:2px;box-sizing:border-box;background:#fff;"></div>
<svg style="position:absolute;left:409px;top:823.57px" width="19" height="19" viewBox="0 0 19 19"><path d="M9.5 0.8 L11.9 6.6 L18.2 7.1 L13.4 11.2 L14.9 17.4 L9.5 14 L4.1 17.4 L5.6 11.2 L0.8 7.1 L7.1 6.6 Z" fill="#dadada"/></svg>
<div class="t" style="left:450px;top:823.57px;width:22px;height:21px;line-height:22.5px;text-align:center;background:#eef8d6;color:#5e9424;-webkit-text-stroke-width:0;font-size:12.5px;font-family:'Liberation Sans', sans-serif;border-radius:1.5px;font-weight:700">N</div>
<div class="t" style="left:493px;top:825.34px;font-size:18.7px;line-height:18.7px;font-family:'Liberation Sans', sans-serif;white-space:nowrap"><span style="color:#3b66ad;">MS-24</span><span style="color:#3b66ad;margin-left:27.5px">List Sorting</span></div>
<div class="t" style="right:52px;top:827.32px;font-size:14px;line-height:14px;color:#666;font-weight:400;font-family:'Liberation Sans', sans-serif;">Sep 19</div>
<div style="position:absolute;left:342px;top:891px;width:1238px;height:1px;background:#e6e6e6;"></div>
<div style="position:absolute;left:369px;top:863.8100000000001px;width:17px;height:17px;border:1px solid #c8c8c8;border-radius:2px;box-sizing:border-box;background:#fff;"></div>
<svg style="position:absolute;left:409px;top:862.3100000000001px" width="19" height="19" viewBox="0 0 19 19"><path d="M9.5 0.8 L11.9 6.6 L18.2 7.1 L13.4 11.2 L14.9 17.4 L9.5 14 L4.1 17.4 L5.6 11.2 L0.8 7.1 L7.1 6.6 Z" fill="#dadada"/></svg>
<div class="t" style="left:450px;top:862.31px;width:22px;height:21px;line-height:22.5px;text-align:center;background:#eef8d6;color:#5e9424;-webkit-text-stroke-width:0;font-size:12.5px;font-family:'Liberation Sans', sans-serif;border-radius:1.5px;font-weight:700">N</div>
<div class="t" style="left:493px;top:864.08px;font-size:18.7px;line-height:18.7px;font-family:'Liberation Sans', sans-serif;white-space:nowrap"><span style="color:#3b66ad;">MS-16</span><span style="color:#3b66ad;margin-left:27.5px">Send Follow-up Emails</span></div>
<div class="t" style="right:52px;top:866.06px;font-size:14px;line-height:14px;color:#666;font-weight:400;font-family:'Liberation Sans', sans-serif;">Sep 16</div>
<div style="position:absolute;left:342px;top:930px;width:1238px;height:1px;background:#e6e6e6;"></div>
<div style="position:absolute;left:369px;top:902.5500000000001px;width:17px;height:17px;border:1px solid #c8c8c8;border-radius:2px;box-sizing:border-box;background:#fff;"></div>
<svg style="position:absolute;left:409px;top:901.0500000000001px" width="19" height="19" viewBox="0 0 19 19"><path d="M9.5 0.8 L11.9 6.6 L18.2 7.1 L13.4 11.2 L14.9 17.4 L9.5 14 L4.1 17.4 L5.6 11.2 L0.8 7.1 L7.1 6.6 Z" fill="#dadada"/></svg>
<div class="t" style="left:450px;top:901.05px;width:22px;height:21px;line-height:22.5px;text-align:center;background:#f6d2f0;color:#4b3b5b;-webkit-text-stroke-width:0;font-size:12.5px;font-family:'Liberation Sans', sans-serif;border-radius:1.5px;font-weight:700">C</div>
<div class="t" style="left:493px;top:902.82px;font-size:18.7px;line-height:18.7px;font-family:'Liberation Sans', sans-serif;white-space:nowrap"><span style="color:#3b66ad;">MS-1</span><span style="color:#3b66ad;margin-left:27.5px">Create Preferred Customer</span></div>
<div class="t" style="right:52px;top:904.80px;font-size:14px;line-height:14px;color:#666;font-weight:400;font-family:'Liberation Sans', sans-serif;">Sep 16</div>
<svg style="position:absolute;left:1489px;top:905.0500000000001px" width="22" height="12" viewBox="0 0 22 12"><path d="M20 3.5 H6 C3 3.5 1.5 5 1.5 6.5 C1.5 8 3 9.5 6 9.5 H18 C19.5 9.5 20.5 8.5 20.5 7 C20.5 5.5 19.5 5 18 5 H7" fill="none" stroke="#d0d0d0" stroke-width="1.5"/></svg>
<div style="position:absolute;left:342px;top:969px;width:1238px;height:1px;background:#e6e6e6;"></div>
<div style="position:absolute;left:369px;top:941.2900000000001px;width:17px;height:17px;border:1px solid #c8c8c8;border-radius:2px;box-sizing:border-box;background:#fff;"></div>
<svg style="position:absolute;left:409px;top:939.7900000000001px" width="19" height="19" viewBox="0 0 19 19"><path d="M9.5 0.8 L11.9 6.6 L18.2 7.1 L13.4 11.2 L14.9 17.4 L9.5 14 L4.1 17.4 L5.6 11.2 L0.8 7.1 L7.1 6.6 Z" fill="#dadada"/></svg>
<div class="t" style="left:450px;top:939.79px;width:22px;height:21px;line-height:22.5px;text-align:center;background:#c9361c;color:#ffffff;-webkit-text-stroke-width:0;font-size:12.5px;font-family:'Liberation Sans', sans-serif;border-radius:1.5px;font-weight:700">S</div>
<div class="t" style="left:493px;top:941.56px;font-size:18.7px;line-height:18.7px;font-family:'Liberation Sans', sans-serif;white-space:nowrap"><span style="color:#3b66ad;">MS-28</span><span style="color:#3b66ad;margin-left:27.5px">Export rules</span></div>
<div class="t" style="right:52px;top:943.54px;font-size:14px;line-height:14px;color:#666;font-weight:400;font-family:'Liberation Sans', sans-serif;">Sep 16</div>
<div style="position:absolute;left:748px;top:119.5px;width:415px;height:85px;background:#fff;border:1px solid #bdbdbd;box-sizing:border-box;box-shadow:0 1px 3px rgba(0,0,0,0.18);"></div>
<div style="position:absolute;left:749px;top:120.5px;width:413px;height:30px;background:#e7e7e7;"></div>
<div style="position:absolute;left:749px;top:181.5px;width:413px;height:22px;background:#fbfbe6;"></div>
<div class="t" style="left:760.5px;top:128.11px;font-size:17px;line-height:17px;color:#333;font-weight:400;font-family:'Liberation Sans', sans-serif;"><b>Unr</b>esolved</div>
<div class="t" style="right:468px;top:127.81px;font-size:17px;line-height:17px;color:#62806f;font-weight:400;font-family:'Liberation Sans', sans-serif;">State</div>
<div class="t" style="left:760px;top:156.94px;font-size:17.2px;line-height:17.2px;color:#333;font-weight:400;font-family:'Liberation Sans', sans-serif;"><span style="color:#aaa">{</span>#{Music Sharing} #<b>Unr</b>esolved<span style="color:#aaa">}</span></div>
<div class="t" style="right:468px;top:156.81px;font-size:17px;line-height:17px;color:#777;font-weight:400;font-family:'Liberation Sans', sans-serif;">saved search</div>
<div class="t" style="left:757.5px;top:186.83px;font-size:13.9px;line-height:13.9px;color:#b9b9aa;font-weight:400;font-family:'Liberation Sans', sans-serif;letter-spacing:-0.1px;">Use <span style="font-size:15px;font-weight:700">&#8629;</span> to complete selected item</div>
</body></html>
